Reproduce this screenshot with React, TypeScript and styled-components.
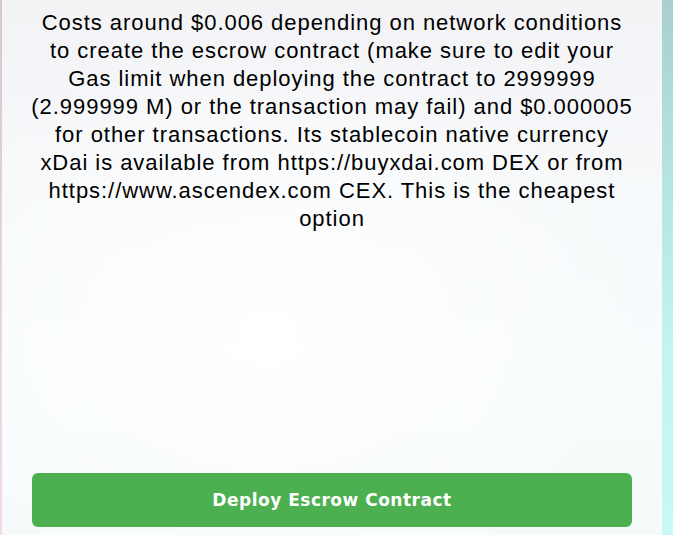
import React from "react";
import styled, { createGlobalStyle } from "styled-components";

const GlobalStyle = createGlobalStyle`
  html, body {
    margin: 0;
    padding: 0;
    height: 100%;
  }
  body {
    font-family: "Liberation Sans", Arial, sans-serif;
    background:
      linear-gradient(180deg, #d6c8c9 0%, #e6d8de 60%, #eddbe7 100%) left top / 2px 100% no-repeat,
      linear-gradient(180deg, #a9cfd1 0%, #b7e4e4 35%, #c4f3f3 65%, #c9f8f8 100%);
    overflow: hidden;
  }
  #root {
    height: 100%;
  }
`;

const Page = styled.main`
  height: 100%;
  display: flex;
  align-items: stretch;
  padding-left: 2px;
`;

const Card = styled.section`
  width: 660px;
  box-sizing: border-box;
  padding: 9px 30px 8px;
  display: flex;
  flex-direction: column;
  justify-content: space-between;
  background:
    radial-gradient(ellipse 60% 55% at 40% 62%, rgba(255, 255, 255, 0.95) 0%, rgba(255, 255, 255, 0) 100%),
    linear-gradient(180deg, #f3f3f6 0%, #f6f8fa 30%, #f8fcfd 70%, #f6fafb 100%);
`;

const Notice = styled.p`
  margin: 0 -12px;
  font-size: 22px;
  line-height: 28px;
  letter-spacing: 0.95px;
  color: #000;
  text-align: center;
`;

const DeployButton = styled.button`
  width: 100%;
  height: 54px;
  border: none;
  border-radius: 6px;
  background: #4caf50;
  color: #fff;
  font-family: "DejaVu Sans", Verdana, sans-serif;
  font-weight: bold;
  font-size: 17px;
  letter-spacing: 0.5px;
  cursor: pointer;
`;

const noticeLines = [
  "Costs around $0.006 depending on network conditions",
  "to create the escrow contract (make sure to edit your",
  "Gas limit when deploying the contract to 2999999",
  "(2.999999 M) or the transaction may fail) and $0.000005",
  "for other transactions. Its stablecoin native currency",
  "xDai is available from https://buyxdai.com DEX or from",
  "https://www.ascendex.com CEX. This is the cheapest",
  "option",
];

export default function App() {
  return (
    <>
      <GlobalStyle />
      <Page>
        <Card>
          <Notice>
            {noticeLines.map((line, i) => (
              <React.Fragment key={i}>
                {line}
                {i < noticeLines.length - 1 && <br />}
              </React.Fragment>
            ))}
          </Notice>
          <DeployButton>Deploy Escrow Contract</DeployButton>
        </Card>
      </Page>
    </>
  );
}
